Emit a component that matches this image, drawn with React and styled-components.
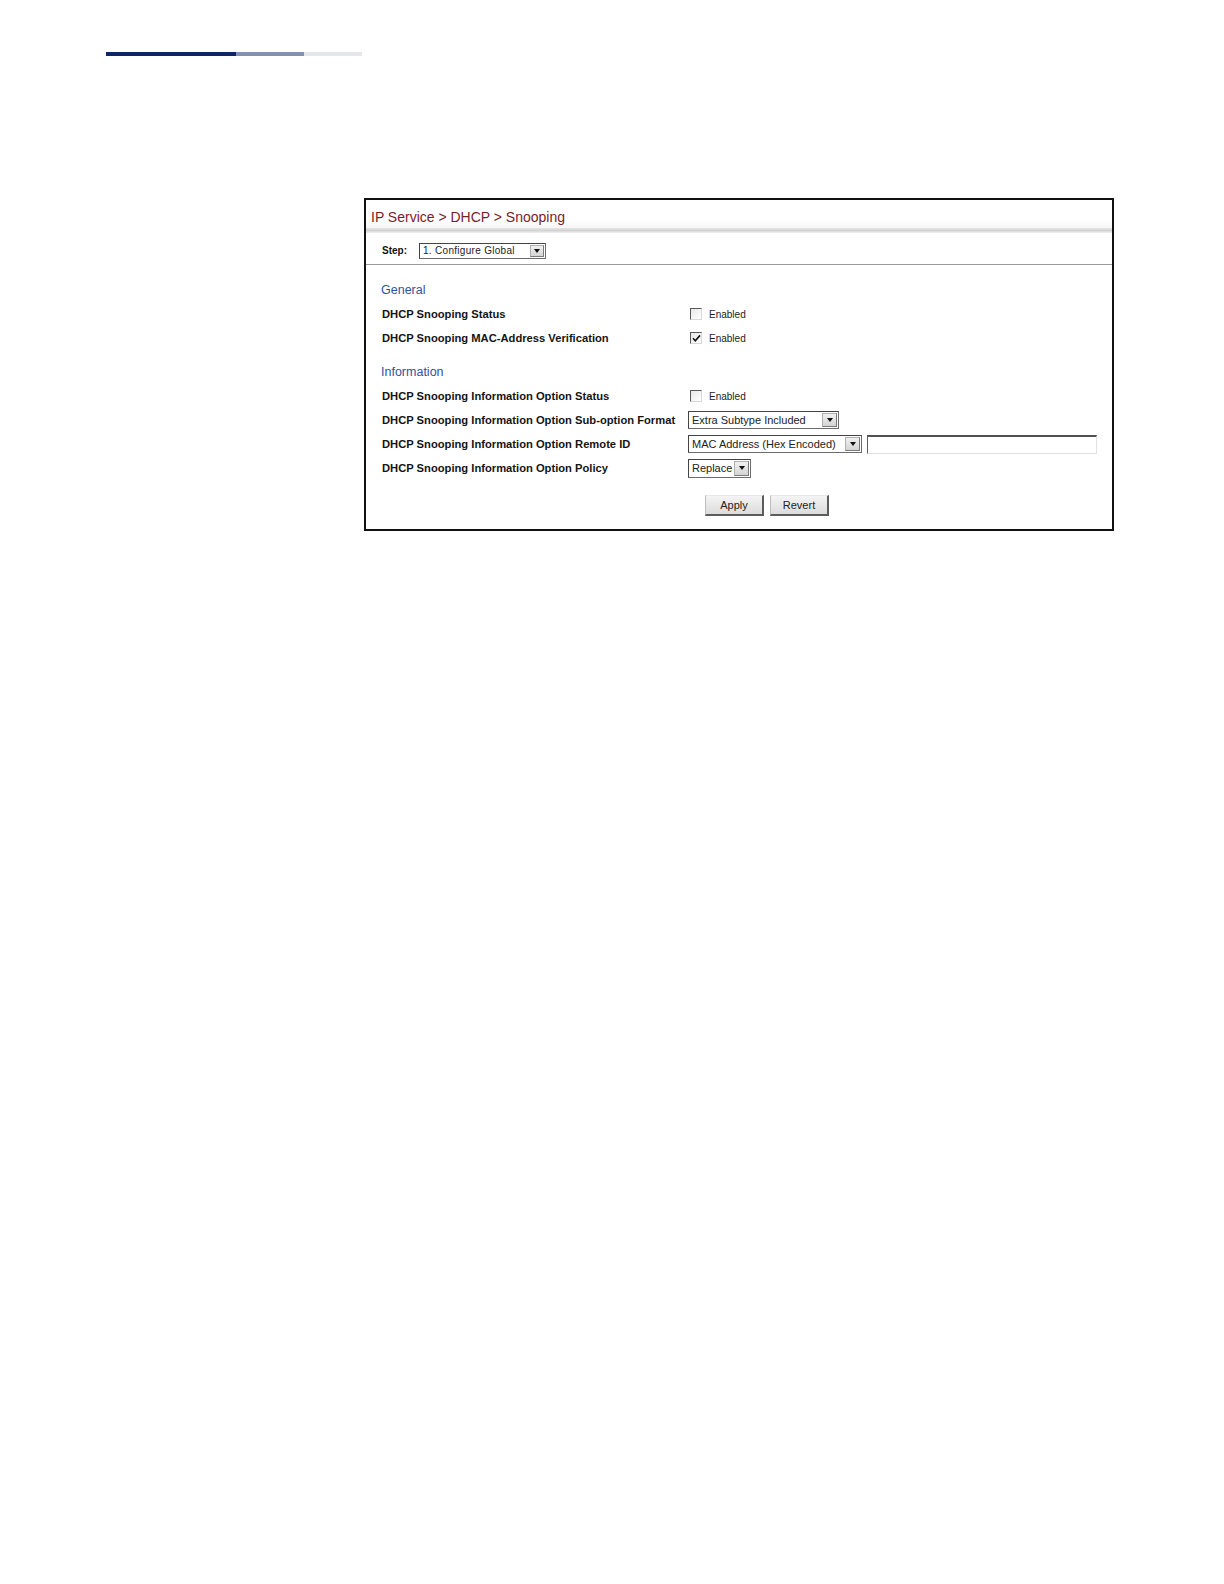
import React from 'react'
import styled, { createGlobalStyle } from 'styled-components'

const GlobalStyle = createGlobalStyle`
    html, body {
        margin: 0;
        padding: 0;
        background: #fff;
    }
    body {
        font-family: "Liberation Sans", Arial, sans-serif;
        color: #111;
    }
`;

const Page = styled.div`
    width: 1224px;
    min-height: 1584px;
    padding-top: 52px;
    box-sizing: border-box;
`;

const HeaderBar = styled.div`
    display: flex;
    margin-left: 106px;
    height: 4px;
`;

const BarPart = styled.div`
    width: ${p => p.w}px;
    background: ${p => p.color};
`;

const Frame = styled.div`
    margin: 142px 0 0 364px;
    width: 750px;
    box-sizing: border-box;
    border: 2px solid #111;
    background: #fff;
`;

const TitleBar = styled.div`
    position: relative;
    height: 28px;
    box-sizing: border-box;
    padding: 5px 0 0 5px;
    display: flex;
    align-items: center;
    font-size: 14px;
    color: #7a1c2a;
    background: linear-gradient(to bottom, #ffffff 0%, #ffffff 70%, #f6f6f6 100%);
    &::after {
        content: "";
        position: absolute;
        left: 0;
        right: 0;
        bottom: -5px;
        height: 5px;
        background: linear-gradient(to bottom, #e6e6e6, #d2d2d2 50%, #f0f0f0);
    }
`;

const StepRow = styled.div`
    height: 32px;
    box-sizing: border-box;
    margin-top: 5px;
    padding: 4px 0 0 16px;
    display: flex;
    align-items: center;
    gap: 12px;
    border-bottom: 1px solid #9a9a9a;
    font-size: 10px;
`;

const StepLabel = styled.span`
    font-weight: bold;
    font-size: 10px;
`;

const Content = styled.div`
    padding: 13px 0 13px 15px;
`;

const Section = styled.div`
    & + & {
        margin-top: 10px;
    }
`;

const SectionTitle = styled.div`
    height: 24px;
    display: flex;
    align-items: center;
    font-size: 12.5px;
    color: #2f52a0;
`;

const Row = styled.div`
    display: grid;
    grid-template-columns: 307px auto;
    align-items: center;
    height: 24px;
`;

const Label = styled.div`
    padding-left: 1px;
    font-size: 11.2px;
    font-weight: bold;
    color: #141414;
    white-space: nowrap;
`;

const Value = styled.div`
    display: flex;
    align-items: center;
    gap: ${p => p.gap || 0}px;
`;

const CheckWrap = styled.label`
    display: flex;
    align-items: center;
    gap: 7px;
    margin-left: 2px;
    font-size: 10px;
    color: #222;
`;

const Box = styled.span`
    width: 10px;
    height: 10px;
    border-top: 1px solid #5a5a5a;
    border-left: 1px solid #5a5a5a;
    border-right: 1px solid #d8d8d8;
    border-bottom: 1px solid #d8d8d8;
    background: linear-gradient(135deg, #e6e6e6, #ffffff);
    display: flex;
    align-items: center;
    justify-content: center;
`;

const SelectBox = styled.div`
    display: flex;
    align-items: stretch;
    width: ${p => p.w}px;
    height: ${p => p.h || 18}px;
    box-sizing: border-box;
    border: 1px solid #6c6c6c;
    border-top-color: #444;
    border-left-color: #444;
    background: #fff;
    font-size: ${p => p.fs || 11}px;
    color: #222;
`;

const SelectText = styled.span`
    flex: 1;
    display: flex;
    align-items: center;
    padding-left: 3px;
    white-space: nowrap;
    overflow: hidden;
    letter-spacing: ${p => p.ls || 0}px;
`;

const DropButton = styled.span`
    width: ${p => p.w || 15}px;
    margin: 1px;
    box-sizing: border-box;
    display: flex;
    align-items: center;
    justify-content: center;
    background: linear-gradient(to bottom, #f0f0f0, #d4d4d4);
    border: 1px solid #b0b0b0;
    border-right-color: #7a7a7a;
    border-bottom-color: #7a7a7a;
`;

const Arrow = styled.span`
    width: 0;
    height: 0;
    border-left: 3px solid transparent;
    border-right: 3px solid transparent;
    border-top: 4px solid #111;
`;

const TextInput = styled.div`
    width: 230px;
    height: 19px;
    box-sizing: border-box;
    border-top: 2px solid #505050;
    border-left: 1px solid #606060;
    border-right: 1px solid #e0e0e0;
    border-bottom: 1px solid #e0e0e0;
    background: #fff;
`;

const ButtonRow = styled.div`
    display: flex;
    gap: 6px;
    margin-top: 15px;
    padding-left: 324px;
`;

const Button = styled.button`
    width: 59px;
    height: 21px;
    padding: 0;
    font-family: "Liberation Sans", Arial, sans-serif;
    font-size: 11px;
    color: #222;
    background: linear-gradient(to bottom, #f4f4f4, #dcdcdc);
    border-top: 1px solid #e8e8e8;
    border-left: 1px solid #bdbdbd;
    border-right: 2px solid #5c5c5c;
    border-bottom: 2px solid #5c5c5c;
`;

const Check = () => (
    <svg width="9" height="9" viewBox="0 0 9 9">
        <path d="M1 4.2 L3.3 6.8 L8 1.4" fill="none" stroke="#111" strokeWidth="1.6" />
    </svg>
)

const Checkbox = ({ checked }) => (
    <CheckWrap>
        <Box>{checked && <Check />}</Box>
        Enabled
    </CheckWrap>
)

const Select = ({ w, h, fs, ls, btn, children }) => (
    <SelectBox w={w} h={h} fs={fs}>
        <SelectText ls={ls}>{children}</SelectText>
        <DropButton w={btn}><Arrow /></DropButton>
    </SelectBox>
)

const App = () => {
    return (
        <Page>
            <GlobalStyle />
            <HeaderBar>
                <BarPart w={130} color="#0b2766" />
                <BarPart w={68} color="#8591b2" />
                <BarPart w={58} color="#e6e7ea" />
            </HeaderBar>

            <Frame>
                <TitleBar>IP Service &gt; DHCP &gt; Snooping</TitleBar>
                <StepRow>
                    <StepLabel>Step:</StepLabel>
                    <Select w={127} h={16} fs={10} ls={0.3} btn={14}>1. Configure Global</Select>
                </StepRow>

                <Content>
                    <Section>
                        <SectionTitle>General</SectionTitle>
                        <Row>
                            <Label>DHCP Snooping Status</Label>
                            <Value><Checkbox /></Value>
                        </Row>
                        <Row>
                            <Label>DHCP Snooping MAC-Address Verification</Label>
                            <Value><Checkbox checked /></Value>
                        </Row>
                    </Section>

                    <Section>
                        <SectionTitle>Information</SectionTitle>
                        <Row>
                            <Label>DHCP Snooping Information Option Status</Label>
                            <Value><Checkbox /></Value>
                        </Row>
                        <Row>
                            <Label>DHCP Snooping Information Option Sub-option Format</Label>
                            <Value>
                                <Select w={151}>Extra Subtype Included</Select>
                            </Value>
                        </Row>
                        <Row>
                            <Label>DHCP Snooping Information Option Remote ID</Label>
                            <Value gap={5}>
                                <Select w={174}>MAC Address (Hex Encoded)</Select>
                                <TextInput />
                            </Value>
                        </Row>
                        <Row>
                            <Label>DHCP Snooping Information Option Policy</Label>
                            <Value>
                                <Select w={63} h={19}>Replace</Select>
                            </Value>
                        </Row>
                    </Section>

                    <ButtonRow>
                        <Button>Apply</Button>
                        <Button>Revert</Button>
                    </ButtonRow>
                </Content>
            </Frame>
        </Page>
    )
}

export default App
